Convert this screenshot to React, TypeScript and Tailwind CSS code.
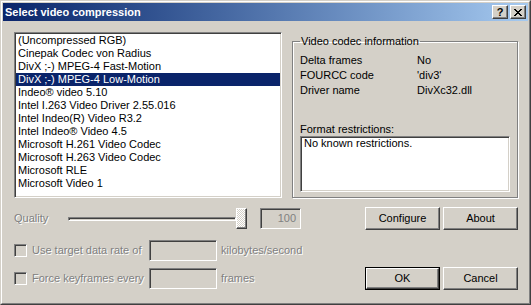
import React from "react";

const codecs = [
  "(Uncompressed RGB)",
  "Cinepak Codec von Radius",
  "DivX ;-) MPEG-4 Fast-Motion",
  "DivX ;-) MPEG-4 Low-Motion",
  "Indeo® video 5.10",
  "Intel I.263 Video Driver 2.55.016",
  "Intel Indeo(R) Video R3.2",
  "Intel Indeo® Video 4.5",
  "Microsoft H.261 Video Codec",
  "Microsoft H.263 Video Codec",
  "Microsoft RLE",
  "Microsoft Video 1",
];

const info = [
  ["Delta frames", "No"],
  ["FOURCC code", "'div3'"],
  ["Driver name", "DivXc32.dll"],
];

const sunken =
  "border border-t-[#808080] border-l-[#808080] border-r-white border-b-white shadow-[inset_1px_1px_0_#404040,inset_-1px_-1px_0_#d4d0c8]";

const Button = ({ label, isDefault }: { label: string; isDefault?: boolean }) => (
  <div
    className={
      "w-[75px] h-[23px] " + (isDefault ? "border border-black" : "")
    }
  >
    <div className="h-full border border-t-white border-l-white border-r-[#404040] border-b-[#404040] shadow-[inset_-1px_-1px_0_#808080] flex items-center justify-center">
      {label}
    </div>
  </div>
);

const Check = ({ label }: { label: string }) => (
  <div className="w-[135px] flex items-center">
    <div className={"w-[13px] h-[13px] bg-[#d4d0c8] " + sunken} />
    <span className="ml-[5px] text-[#808080] [text-shadow:1px_1px_0_#ffffff]">
      {label}
    </span>
  </div>
);

const Edit = ({ w, value }: { w: string; value?: string }) => (
  <div className={w + " h-[21px] bg-[#d4d0c8] text-right pr-[4px] leading-[19px] text-[#808080] " + sunken}>
    {value}
  </div>
);

export default function App() {
  return (
    <div className="w-[531px] h-[305px] bg-[#d4d0c8] border border-[#d4d0c8] border-r-[#404040] border-b-[#404040] font-['Liberation_Sans',Arial,sans-serif] text-[11px] leading-[13px] text-black overflow-hidden select-none">
      <div className="h-full border border-white border-r-[#808080] border-b-[#808080] p-px flex flex-col">
        {/* title bar */}
        <div className="h-[18px] bg-gradient-to-r from-[#0a246a] to-[#a6caf0] flex items-center pl-[2px] pr-[2px]">
          <span className="text-white font-bold text-[11px]">Select video compression</span>
          <div className="ml-auto flex gap-[2px]">
            <div className="w-[16px] h-[14px] bg-[#d4d0c8] border border-t-white border-l-white border-r-[#404040] border-b-[#404040] shadow-[inset_-1px_-1px_0_#808080] flex items-center justify-center font-bold text-[11px] leading-none pt-[1px]">
              ?
            </div>
            <div className="w-[16px] h-[14px] bg-[#d4d0c8] border border-t-white border-l-white border-r-[#404040] border-b-[#404040] shadow-[inset_-1px_-1px_0_#808080] flex items-center justify-center">
              <svg width="8" height="7" viewBox="0 0 8 7" shapeRendering="crispEdges">
                <path d="M0 0h2v1H0zM6 0h2v1H6zM1 1h2v1H1zM5 1h2v1H5zM2 2h4v1H2zM3 3h2v1H3zM2 4h4v1H2zM1 5h2v1H1zM5 5h2v1H5zM0 6h2v1H0zM6 6h2v1H6z" fill="#000" />
              </svg>
            </div>
          </div>
        </div>

        {/* body */}
        <div className="flex-1 pl-[11px] pr-[10px] pt-[11px] flex flex-col">
          <div className="flex gap-[10px]">
            <div className={"w-[268px] h-[166px] bg-white " + sunken}>
              <div className="pt-px px-px">
                {codecs.map((c, i) => (
                  <div
                    key={c}
                    className={
                      "h-[13px] pl-[2px] whitespace-nowrap " +
                      (i === 3 ? "bg-[#0a246a] text-white" : "")
                    }
                  >
                    {c}
                  </div>
                ))}
              </div>
            </div>

            <fieldset className="mt-[3px] w-[226px] h-[163px] border border-[#808080] shadow-[inset_1px_1px_0_#ffffff,1px_1px_0_#ffffff] pl-[7px] pr-[7px]">
              <legend className="px-[1px] leading-[13px]">Video codec information</legend>
              <div className="pt-[5px]">
                {info.map(([k, v]) => (
                  <div key={k} className="h-[15px] flex items-center">
                    <span className="w-[117px]">{k}</span>
                    <span>{v}</span>
                  </div>
                ))}
              </div>
              <div className="mt-[25px]">Format restrictions:</div>
              <div className={"w-[210px] h-[56px] bg-white pl-[3px] " + sunken}>
                No known restrictions.
              </div>
            </fieldset>
          </div>

          {/* quality row */}
          <div className="mt-[9px] h-[23px] flex items-center">
            <span className="w-[54px] text-[#808080] [text-shadow:1px_1px_0_#ffffff]">Quality</span>
            <div className="w-[179px] h-[21px] flex items-center">
              <div className="flex-1 h-[4px] border border-t-[#808080] border-l-[#808080] border-r-white border-b-white shadow-[inset_1px_1px_0_#404040]" />
              <div className="w-[11px] h-[21px] border border-t-white border-l-white border-r-[#404040] border-b-[#404040] shadow-[inset_-1px_-1px_0_#808080] bg-[repeating-conic-gradient(#ffffff_0_25%,#d4d0c8_0_50%)] bg-[length:2px_2px]" />
            </div>
            <div className="ml-[13px]">
              <Edit w="w-[41px]" value="100" />
            </div>
            <div className="ml-auto flex gap-[3px]">
              <Button label="Configure" />
              <Button label="About" />
            </div>
          </div>

          {/* data rate row */}
          <div className="mt-[10px] h-[21px] flex items-center">
            <Check label="Use target data rate of" />
            <Edit w="w-[68px]" />
            <span className="ml-[4px] text-[#808080] [text-shadow:1px_1px_0_#ffffff]">kilobytes/second</span>
          </div>

          {/* keyframes row */}
          <div className="mt-[6px] h-[23px] flex items-center">
            <Check label="Force keyframes every" />
            <Edit w="w-[68px]" />
            <span className="ml-[4px] text-[#808080] [text-shadow:1px_1px_0_#ffffff]">frames</span>
            <div className="ml-auto flex gap-[3px]">
              <Button label="OK" isDefault />
              <Button label="Cancel" />
            </div>
          </div>
        </div>
      </div>
    </div>
  );
}
